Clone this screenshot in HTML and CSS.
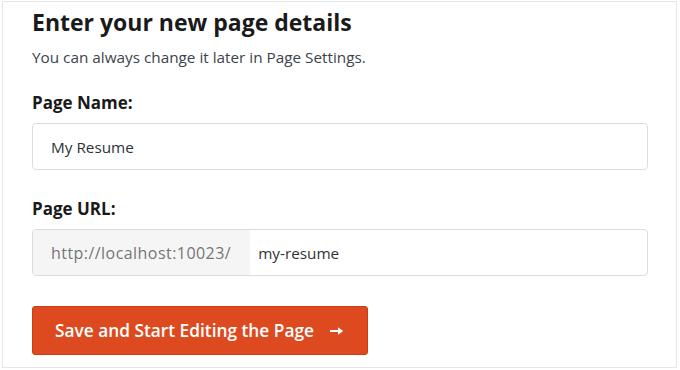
FILE: index.html
```html
<!DOCTYPE html>
<html>
<head>
<meta charset="utf-8">
<link rel="stylesheet" href="styles.css">
</head>
<body>
<div class="panel">
  <h1 class="title">Enter your new page details</h1>
  <p class="subtitle">You can always change it later in Page Settings.</p>
  <div class="field">
    <label class="label">Page Name:</label>
    <div class="input">My Resume</div>
  </div>
  <div class="field field-url">
    <label class="label">Page URL:</label>
    <div class="input input-url">
      <span class="prefix">http://localhost:10023/</span>
      <span class="slug">my-resume</span>
    </div>
  </div>
  <button class="btn">Save and Start Editing the Page <svg class="arrow" width="14" height="10" viewBox="0 0 14 10"><path d="M0 5 H11" stroke="#fff" stroke-width="2" fill="none"/><path d="M8 1.2 L13.2 5 L8 8.8 Z" fill="#fff"/></svg></button>
</div>
</body>
</html>
```

FILE: styles.css
```css
html, body {
  margin: 0;
  padding: 0;
  background: #ffffff;
}
body {
  font-family: "Open Sans", "Liberation Sans", sans-serif;
  color: #1d2327;
}
.panel {
  box-sizing: border-box;
  width: 675px;
  height: 367px;
  margin: 1px 0 0 2px;
  border: 1px solid #e6e6e6;
  padding: 5px 28px 0 29px;
}
.title {
  margin: 0;
  font-size: 23px;
  font-weight: 700;
  line-height: 30px;
  color: #1a1a1a;
}
.subtitle {
  margin: 10px 0 0;
  font-size: 15.3px;
  line-height: 20px;
  color: #3c434a;
}
.field {
  margin-top: 25px;
  display: flex;
  flex-direction: column;
}
.field-url {
  margin-top: 28px;
}
.label {
  font-size: 17px;
  font-weight: 700;
  line-height: 22px;
  color: #1a1a1a;
  margin-bottom: 9px;
}
.input {
  box-sizing: border-box;
  height: 47px;
  border: 1px solid #dcdcdc;
  border-radius: 4px;
  display: flex;
  align-items: center;
  padding-left: 18px;
  font-size: 15.3px;
  color: #2c3338;
}
.input-url {
  padding-left: 0;
  overflow: hidden;
}
.prefix {
  align-self: stretch;
  display: flex;
  align-items: center;
  background: #f5f5f5;
  color: #757575;
  font-size: 16px;
  letter-spacing: 0.45px;
  padding: 0 19px 0 18px;
}
.slug {
  padding-left: 8px;
}
.btn {
  margin-top: 30px;
  box-sizing: border-box;
  width: 336px;
  height: 49px;
  background: #dd4a1f;
  border: 1px solid #d03b13;
  border-radius: 3px;
  color: #ffffff;
  font-family: "Open Sans", "Liberation Sans", sans-serif;
  font-size: 17.3px;
  font-weight: 600;
  text-align: left;
  padding: 0 0 0 22px;
  display: flex;
  align-items: center;
}
.arrow {
  margin-left: 16px;
  margin-top: 1px;
}
```
